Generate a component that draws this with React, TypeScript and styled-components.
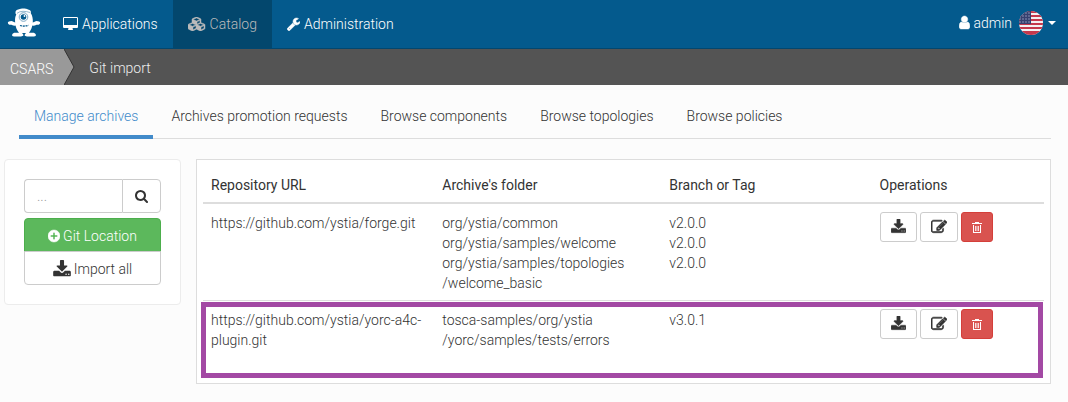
import React from "react";
import styled, { createGlobalStyle, css } from "styled-components";

const GlobalStyle = createGlobalStyle`
  *, *::before, *::after { box-sizing: border-box; }
  body {
    margin: 0;
    background: #fcfcfc;
    color: #333;
    font-family: Roboto, "Liberation Sans", sans-serif;
    font-size: 14px;
    font-weight: 300;
    line-height: 20px;
  }
  button, input { font: inherit; color: inherit; }
  a { color: inherit; text-decoration: none; }
`;

/* ---------- icons ---------- */

const icons = {
  desktop: {
    w: 1920,
    x: -64,
    d: "M1728 992v-832q0-13-9.5-22.5t-22.5-9.5h-1600q-13 0-22.5 9.5t-9.5 22.5v832q0 13 9.5 22.5t22.5 9.5h1600q13 0 22.5-9.5t9.5-22.5zm128-832v1088q0 66-47 113t-113 47h-544q0 37 16 77.5t32 71 16 43.5q0 26-19 45t-45 19h-512q-26 0-45-19t-19-45q0-14 16-44t32-70 16-78h-544q-66 0-113-47t-47-113v-1088q0-66 47-113t113-47h1600q66 0 113 47t47 113z",
  },
  cubes: {
    w: 2304,
    x: 0,
    d: "M640 1632l384-192v-314l-384 164v342zm-64-454l404-173-404-173-404 173zm1088 454l384-192v-314l-384 164v342zm-64-454l404-173-404-173-404 173zm-448-293l384-165v-266l-384 164v267zm-64-379l441-189-441-189-441 189zm1088 518v416q0 36-19 67t-52 47l-448 224q-25 14-57 14t-57-14l-448-224q-4-2-7-4-2 2-7 4l-448 224q-25 14-57 14t-57-14l-448-224q-33-16-52-47t-19-67v-416q0-38 21.5-70t56.5-48l434-186v-400q0-38 21.5-70t56.5-48l448-192q23-10 50-10t50 10l448 192q35 16 56.5 48t21.5 70v400l434 186q36 16 57 48t21 70z",
  },
  wrench: {
    w: 1664,
    x: 64,
    d: "M448 1472q0-26-19-45t-45-19-45 19-19 45 19 45 45 19 45-19 19-45zm644-420l-682 682q-37 37-90 37-52 0-91-37l-106-108q-38-36-38-90 0-53 38-91l681-681q39 98 114.5 173.5t173.5 114.5zm634-435q0 39-23 106-47 134-164.5 217.5t-258.5 83.5q-185 0-316.5-131.5t-131.5-316.5 131.5-316.5 316.5-131.5q58 0 121.5 16.5t107.5 46.5q16 11 16 28t-16 28l-293 169v224l193 107q5-3 79-48.5t135.5-81 70.5-35.5q15 0 23.5 10t8.5 25z",
  },
  user: {
    w: 1280,
    x: 256,
    d: "M1536 1399q0 109-62.5 187t-150.5 78h-854q-88 0-150.5-78t-62.5-187q0-85 8.5-160.5t31.5-152 58.5-131 94-89 134.5-34.5q131 128 313 128t313-128q76 0 134.5 34.5t94 89 58.5 131 31.5 152 8.5 160.5zm-256-887q0 159-112.5 271.5t-271.5 112.5-271.5-112.5-112.5-271.5 112.5-271.5 271.5-112.5 271.5 112.5 112.5 271.5z",
  },
  search: {
    w: 1664,
    x: 64,
    d: "M1216 832q0-185-131.5-316.5t-316.5-131.5-316.5 131.5-131.5 316.5 131.5 316.5 316.5 131.5 316.5-131.5 131.5-316.5zm512 832q0 52-38 90t-90 38q-54 0-90-38l-343-342q-179 124-399 124-143 0-273.5-55.5t-225-150-150-225-55.5-273.5 55.5-273.5 150-225 225-150 273.5-55.5 273.5 55.5 225 150 150 225 55.5 273.5q0 220-124 399l343 343q37 37 37 90z",
  },
  plus: {
    w: 1536,
    x: 128,
    d: "M1344 960v-128q0-26-19-45t-45-19h-256v-256q0-26-19-45t-45-19h-128q-26 0-45 19t-19 45v256h-256q-26 0-45 19t-19 45v128q0 26 19 45t45 19h256v256q0 26 19 45t45 19h128q26 0 45-19t19-45v-256h256q26 0 45-19t19-45zm320-64q0 209-103 385.5t-279.5 279.5-385.5 103-385.5-103-279.5-279.5-103-385.5 103-385.5 279.5-279.5 385.5-103 385.5 103 279.5 279.5 103 385.5z",
  },
  download: {
    w: 1664,
    x: 64,
    d: "M1344 1344q0-26-19-45t-45-19-45 19-19 45 19 45 45 19 45-19 19-45zm256 0q0-26-19-45t-45-19-45 19-19 45 19 45 45 19 45-19 19-45zm128-224v320q0 40-28 68t-68 28h-1472q-40 0-68-28t-28-68v-320q0-40 28-68t68-28h465l135 136q58 56 136 56t136-56l136-136h464q40 0 68 28t28 68zm-325-569q17 41-14 70l-448 448q-18 19-45 19t-45-19l-448-448q-31-29-14-70 17-39 59-39h256v-448q0-26 19-45t45-19h256q26 0 45 19t19 45v448h256q42 0 59 39z",
  },
  edit: {
    w: 1792,
    x: 0,
    d: "M888 1184l116-116-152-152-116 116v56h96v96h56zm440-720q-16-16-33 1l-350 350q-17 17-1 33t33-1l350-350q17-17 1-33zm80 594v190q0 119-84.5 203.5t-203.5 84.5h-832q-119 0-203.5-84.5t-84.5-203.5v-832q0-119 84.5-203.5t203.5-84.5h832q63 0 117 25 15 7 18 23 3 17-9 29l-49 49q-14 14-32 8-23-6-45-6h-832q-66 0-113 47t-47 113v832q0 66 47 113t113 47h832q66 0 113-47t47-113v-126q0-13 9-22l64-64q15-15 35-7t20 29zm-96-738l288 288-672 672h-288v-288zm444 132l-92 92-288-288 92-92q28-28 68-28t68 28l152 152q28 28 28 68t-28 68z",
  },
};

const IconSvg = styled.svg`
  display: block;
  flex: none;
  fill: currentColor;
`;

interface IconProps {
  name: keyof typeof icons;
  size?: number;
  weight?: number;
}

function Icon({ name, size = 14, weight = 0 }: IconProps) {
  const { w, x, d } = icons[name];
  return (
    <IconSvg
      width={Math.round((size * w) / 1792)}
      height={size}
      viewBox={`${x} 0 ${w} 1792`}
      aria-hidden="true"
    >
      <path d={d} stroke="currentColor" strokeWidth={weight} />
    </IconSvg>
  );
}

function TrashIcon() {
  return (
    <IconSvg width="10" height="12" viewBox="0 0 10 12" aria-hidden="true">
      <path fillRule="evenodd" d="M3 1h4v1h3v1H0V2h3zM1 4h8v8H1zM2 4v7h6V4z" />
      <path d="M3 5h1v5H3zM6 5h1v5H6zM4.500 5h1v5h-1z" opacity="0.8" />
    </IconSvg>
  );
}

function Logo() {
  return (
    <IconSvg width="34" height="30" viewBox="0 0 34 30" role="img" aria-label="Alien4Cloud">
      <g fill="#fff">
        <path d="M8.500 5.500C8 3 9.500 1.500 12 1.300 14 .2 19 .2 21 1.500c2.500.3 3.300 1.800 2.800 3.700C25.300 7.500 26 10.500 25.800 14c-.2 4.500-1.800 8.500-4 11h-9.600c-2.400-2.500-3.900-6.500-4.100-11C7.900 10.800 8.200 8.500 9.300 6.500z" />
        <path d="M9 14.500C7 14.800 5.500 12.600 3.500 13.200 1.500 13 .5 14 1 15.400c.7 1.400 2 1.200 3.400 1.400 1.500.8 3.100 1 4.600.8zM25 14.500c2 .3 3.500-1.900 5.500-1.300 2-.2 3 .8 2.500 2.200-.7 1.400-2 1.200-3.400 1.400-1.500.8-3.100 1-4.600.8z" />
        <path d="M14 23.500l2.500 3.500c-.5 1-1.300 1.400-2.500 1.400H7c-1.500 0-2.200-.8-1.800-2 .5-1.400 2.300-2 4.300-1.600 1.300.2 2.500 0 3-.8zM20 23.500L17.500 27c.5 1 1.300 1.400 2.500 1.400h7c1.500 0 2.200-.8 1.800-2-.5-1.400-2.300-2-4.300-1.600-1.300.2-2.500 0-3-.8z" />
      </g>
      <path fill="none" stroke="#7aa6c2" strokeWidth="0.800" d="M10 5.300q2.500-2 6-2t7 1.200" />
      <circle cx="16.500" cy="9" r="4.300" fill="#fff" stroke="#6d9dbd" strokeWidth="0.900" />
      <circle cx="16.500" cy="9" r="2.800" fill="#045a8d" />
      <circle cx="17.500" cy="8" r="0.900" fill="#fff" />
      <path fill="none" stroke="#045a8d" strokeWidth="1.300" strokeDasharray="2 0.800" d="M13 17.500q4 1.200 8.500-.3" />
    </IconSvg>
  );
}

function Flag() {
  const stripes = [0, 4, 8, 12, 16, 20];
  return (
    <IconSvg width="24" height="24" viewBox="0 0 24 24" role="img" aria-label="English">
      <clipPath id="flag-round">
        <circle cx="12" cy="12" r="12" />
      </clipPath>
      <g clipPath="url(#flag-round)">
        <rect width="24" height="24" fill="#f4f0f2" />
        {stripes.map((y) => (
          <rect key={y} y={y} width="24" height="2" fill="#c4384c" />
        ))}
        <rect y="22" width="24" height="2" fill="#c4384c" />
        <rect width="12" height="13" fill="#36406f" />
        {[2, 5, 8, 11].map((y) =>
          [1, 4, 7, 10].map((x) => (
            <circle key={`${x}-${y}`} cx={x} cy={y} r="0.700" fill="#aab0cc" />
          ))
        )}
      </g>
    </IconSvg>
  );
}

/* ---------- header ---------- */

const Header = styled.header`
  display: flex;
  align-items: stretch;
  justify-content: space-between;
  height: 49px;
  background: #045a8d;
  border-bottom: 1px solid #03476f;
  color: #fff;
`;

const Nav = styled.nav`
  display: flex;
`;

const Brand = styled.a`
  display: flex;
  align-items: center;
  padding: 0 7px 2px;
`;

const NavLink = styled.a<{ $active?: boolean }>`
  display: flex;
  align-items: center;
  gap: 4px;
  padding: 0 15px;
  ${(p) =>
    p.$active &&
    css`
      background: #03476d;
      color: #bbb;
    `}
`;

const UserArea = styled.div`
  display: flex;
  align-items: center;
  gap: 7px;
  padding: 0 12px 2px 0;
`;

const UserName = styled.a`
  display: flex;
  align-items: center;
  gap: 3px;
  padding-bottom: 1px;
`;

const LanguageButton = styled.button`
  display: flex;
  align-items: center;
  gap: 5px;
  padding: 0;
  border: 0;
  background: none;

  &::after {
    content: "";
    border: 4px solid transparent;
    border-top-color: #fff;
    border-bottom: 0;
  }
`;

/* ---------- breadcrumb ---------- */

const Breadcrumb = styled.nav`
  display: flex;
  align-items: center;
  height: 36px;
  background: #545454;
  color: #eee;
`;

const CrumbRoot = styled.a`
  display: flex;
  align-items: center;
  height: 100%;
  padding: 4px 11px 0 10px;
  background: #999;
  color: #fff;
`;

const CrumbCurrent = styled.span`
  padding: 2px 14px 0;
`;

/* ---------- tabs ---------- */

const Tabs = styled.nav`
  display: flex;
  gap: 3px;
  margin: 11px 17px 20px 19px;
  border-bottom: 1px solid #ddd;
`;

const Tab = styled.a<{ $active?: boolean }>`
  margin-bottom: -1px;
  padding: 10px 15px 9px;
  border-bottom: 4px solid ${(p) => (p.$active ? "#428bca" : "transparent")};
  color: ${(p) => (p.$active ? "#428bca" : "inherit")};
`;

/* ---------- content ---------- */

const Content = styled.main`
  display: flex;
  align-items: flex-start;
  gap: 15px;
  padding: 0 17px 18px 4px;
`;

const Sidebar = styled.aside`
  flex: none;
  width: 177px;
  padding: 19px;
  background: #fff;
  border: 1px solid #ececec;
  border-radius: 4px;
`;

const SearchForm = styled.form`
  display: flex;
  margin-bottom: 5px;
`;

const SearchInput = styled.input`
  flex: 1;
  min-width: 0;
  height: 34px;
  padding: 6px 12px;
  border: 1px solid #ccc;
  border-right: 0;
  border-radius: 4px 0 0 4px;
  background: #fff;
  outline: 0;

  &::placeholder { color: #999; opacity: 1; }
`;

const SearchButton = styled.button`
  padding: 0 12px;
  border: 1px solid #ccc;
  border-radius: 0 4px 4px 0;
  background: #fff;
`;

const ButtonStack = styled.div`
  display: flex;
  flex-direction: column;
`;

const StackButton = styled.button<{ $primary?: boolean }>`
  display: flex;
  align-items: center;
  justify-content: center;
  gap: 3px;
  height: 34px;
  padding: 2px 12px 0;
  border: 1px solid #ccc;
  border-radius: 0 0 4px 4px;
  background: #fff;

  & + & { margin-top: -1px; }

  ${(p) =>
    p.$primary &&
    css`
      background: #5cb85c;
      border-color: #4cae4c;
      border-radius: 4px 4px 0 0;
      color: #fff;
    `}
`;

const Panel = styled.section`
  flex: 1;
  min-width: 0;
  padding: 6px;
  background: #fff;
  border: 1px solid #ddd;
`;

const TableArea = styled.div`
  position: relative;
  padding-bottom: 20px;
`;

const Table = styled.table`
  width: 100%;
  table-layout: fixed;
  border-collapse: separate;
  border-spacing: 0;
`;

const HeadCell = styled.th<{ $width: string }>`
  width: ${(p) => p.$width};
  padding: 9px 8px 7px;
  border-bottom: 2px solid #ddd;
  font-weight: 400;
  text-align: left;
`;

const Cell = styled.td<{ $controls?: boolean }>`
  padding: ${(p) => (p.$controls ? "8px" : "9px 8px 7px")};
  vertical-align: top;

  tr + tr > & { border-top: 1px solid #ddd; }
`;

const Operations = styled.div`
  display: flex;
  gap: 3px;
`;

const OperationButton = styled.button<{ $danger?: boolean }>`
  display: flex;
  align-items: center;
  height: 30px;
  padding: 0 10px;
  border: 1px solid ${(p) => (p.$danger ? "#d43f3a" : "#ccc")};
  border-radius: 3px;
  background: ${(p) => (p.$danger ? "#d9534f" : "#fff")};
  color: ${(p) => (p.$danger ? "#fff" : "#333")};
`;

const Highlight = styled.div`
  position: absolute;
  right: 1px;
  bottom: -1px;
  left: -2px;
  height: 76px;
  border: 5px solid #a349a4;
  pointer-events: none;
`;

const tabs = [
  "Manage archives",
  "Archives promotion requests",
  "Browse components",
  "Browse topologies",
  "Browse policies",
];

const repositories = [
  {
    url: "https://github.com/ystia/forge.git",
    locations: [
      { folder: ["org/ystia/common"], branch: "v2.0.0" },
      { folder: ["org/ystia/samples/welcome"], branch: "v2.0.0" },
      { folder: ["org/ystia/samples/topologies", "/welcome_basic"], branch: "v2.0.0" },
    ],
  },
  {
    url: "https://github.com/ystia/yorc-a4c-plugin.git",
    locations: [
      { folder: ["tosca-samples/org/ystia", "/yorc/samples/tests/errors"], branch: "v3.0.1" },
    ],
  },
];

export default function App() {
  return (
    <>
      <GlobalStyle />
      <Header>
        <Nav>
          <Brand href="#"><Logo /></Brand>
          <NavLink href="#"><Icon name="desktop" />Applications</NavLink>
          <NavLink href="#" $active><Icon name="cubes" weight={60} />Catalog</NavLink>
          <NavLink href="#"><Icon name="wrench" weight={60} />Administration</NavLink>
        </Nav>
        <UserArea>
          <UserName href="#"><Icon name="user" size={15} weight={60} />admin</UserName>
          <LanguageButton type="button" aria-label="Language"><Flag /></LanguageButton>
        </UserArea>
      </Header>
      <Breadcrumb>
        <CrumbRoot href="#">CSARS</CrumbRoot>
        <IconSvg width="11" height="36" viewBox="0 0 11 36" aria-hidden="true">
          <path d="M0 0L10 18L0 36z" fill="#999" />
          <path d="M0 0L10 18L0 36" fill="none" stroke="#333" />
        </IconSvg>
        <CrumbCurrent>Git import</CrumbCurrent>
      </Breadcrumb>
      <Tabs>
        {tabs.map((label, i) => (
          <Tab key={label} href="#" $active={i === 0}>{label}</Tab>
        ))}
      </Tabs>
      <Content>
        <Sidebar>
          <SearchForm>
            <SearchInput type="text" placeholder="..." aria-label="Search" />
            <SearchButton type="button" aria-label="Run search"><Icon name="search" /></SearchButton>
          </SearchForm>
          <ButtonStack>
            <StackButton type="button" $primary><Icon name="plus" weight={60} />Git Location</StackButton>
            <StackButton type="button"><Icon name="download" size={19} />Import all</StackButton>
          </ButtonStack>
        </Sidebar>
        <Panel>
          <TableArea>
            <Table>
              <thead>
                <tr>
                  <HeadCell $width="27.5%">Repository URL</HeadCell>
                  <HeadCell $width="27%">Archive's folder</HeadCell>
                  <HeadCell $width="25%">Branch or Tag</HeadCell>
                  <HeadCell $width="20.5%">Operations</HeadCell>
                </tr>
              </thead>
              <tbody>
                {repositories.map((repo) => (
                  <tr key={repo.url}>
                    <Cell>{repo.url}</Cell>
                    <Cell>
                      {repo.locations.map(({ folder: [head, tail] }) => (
                        <div key={head}>{head}{tail && <><wbr />{tail}</>}</div>
                      ))}
                    </Cell>
                    <Cell>
                      {repo.locations.map(({ folder, branch }) => (
                        <div key={folder[0]}>{branch}</div>
                      ))}
                    </Cell>
                    <Cell $controls>
                      <Operations>
                        <OperationButton type="button" aria-label="Import"><Icon name="download" size={16} weight={40} /></OperationButton>
                        <OperationButton type="button" aria-label="Edit"><Icon name="edit" size={16} weight={70} /></OperationButton>
                        <OperationButton type="button" aria-label="Delete" $danger><TrashIcon /></OperationButton>
                      </Operations>
                    </Cell>
                  </tr>
                ))}
              </tbody>
            </Table>
            <Highlight />
          </TableArea>
        </Panel>
      </Content>
    </>
  );
}
